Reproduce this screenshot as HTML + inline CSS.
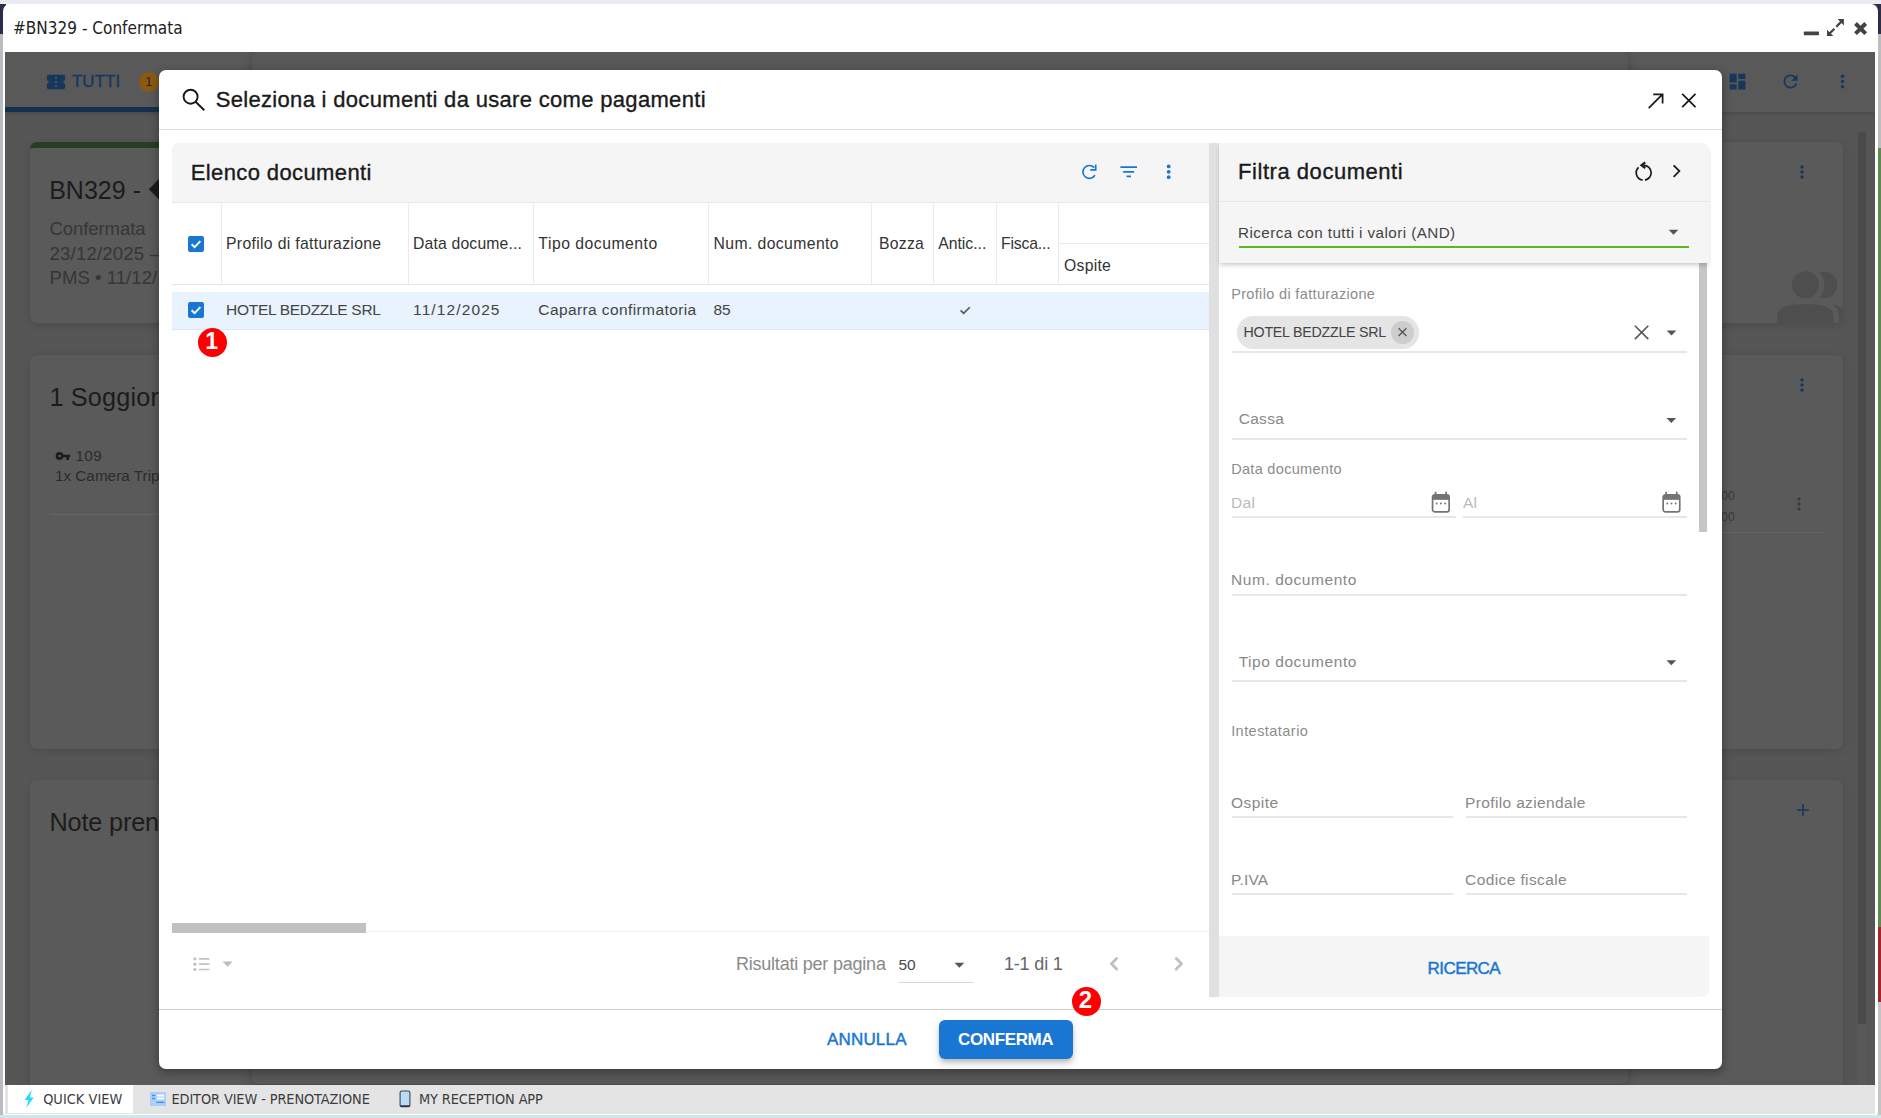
<!DOCTYPE html>
<html lang="it"><head><meta charset="utf-8"><title>#BN329 - Confermata</title>
<style>
html,body{margin:0;padding:0}
body{width:1881px;height:1118px;overflow:hidden;position:relative;background:#e8ecf1;font-family:"Liberation Sans",sans-serif}
.a{position:absolute;box-sizing:border-box}
.t{white-space:nowrap}
svg{display:block}
</style></head><body>
<div class="a" style="left:0px;top:4px;width:3px;height:1114px;background:#b9bcc0;"></div>
<div class="a" style="left:0px;top:4px;width:6px;height:30px;background:#2b2d4a;"></div>
<div class="a" style="left:1872px;top:4px;width:9px;height:30px;background:#2b2d4a;"></div>
<div class="a" style="left:1878px;top:34px;width:3px;height:114px;background:#bdbdbd;"></div>
<div class="a" style="left:1878px;top:148px;width:3px;height:779px;background:#5c8c4c;"></div>
<div class="a" style="left:1878px;top:927px;width:3px;height:75px;background:#a3262b;"></div>
<div class="a" style="left:1878px;top:1002px;width:3px;height:116px;background:#c4c4c4;"></div>
<div class="a" style="left:0px;top:1115px;width:1881px;height:3px;background:#cfe7eb;"></div>
<div class="a" style="left:3px;top:4px;width:1875px;height:1111px;background:#ffffff;border-radius:7px 7px 4px 4px;"></div>
<div class="a" style="left:5px;top:52px;width:1870px;height:1033px;background:#565656;overflow:hidden;"></div>
<div class="a" style="left:5px;top:1085px;width:1870px;height:29px;background:#e4e4e4;"></div>
<div class="a" style="left:8px;top:1085px;width:125px;height:28px;background:#ffffff;"></div>
<span class="a t" id="title" style="left:12.98px;top:14.50px;font:400 17px/26px 'DejaVu Sans Condensed', 'DejaVu Sans', 'Liberation Sans', sans-serif;color:#222;letter-spacing:0.020px;">#BN329 - Confermata</span>
<svg class="a" style="left:1800px;top:14px" width="72" height="28" viewBox="0 0 72 28"><g fill="#444"><rect x="3.8" y="17.5" width="15.2" height="3.8" rx="0.7"/><path d="M37.6,5.1H43.9V11.4ZM27,15.7V22H33.3Z"/></g><g fill="none" stroke="#444"><path d="M36.3,12.7L41.6,7.4M34.4,14.7L29.3,19.8" stroke-width="2.3"/><path d="M55.5,9.5L65.7,19.7M65.7,9.5L55.5,19.7" stroke-width="4"/></g></svg>
<div class="a" style="left:5px;top:52px;width:1870px;height:60px;background:#595959;box-shadow:0 2px 4px rgba(0,0,0,.14);clip-path:inset(0px 0px -8px 0px);"></div>
<svg class="a" style="left:44.80px;top:70.80px;" width="22" height="22" viewBox="0 0 24 24"><path fill="#16375b" d="M13,8.5H11V6.5H13V8.5M13,13H11V11H13V13M13,17.5H11V15.5H13V17.5M22,10V6C22,4.89 21.1,4 20,4H4A2,2 0 0,0 2,6V10C3.11,10 4,10.9 4,12A2,2 0 0,1 2,14V18A2,2 0 0,0 4,20H20A2,2 0 0,0 22,18V14A2,2 0 0,1 20,12C20,10.89 20.9,10 22,10Z"/></svg>
<span class="a t" id="tutti" style="left:71.98px;top:68.80px;font:400 17px/26px 'Liberation Sans', sans-serif;color:#16375b;letter-spacing:0.009px;-webkit-text-stroke:0.3px #16375b;">TUTTI</span>
<div class="a" style="left:139px;top:72px;width:20px;height:20px;background:#8a5a12;border-radius:50%;"></div>
<span class="a t" id="b1" style="left:145.58px;top:73.00px;font:400 12px/18px 'Liberation Sans', sans-serif;color:#2a2210;">1</span>
<div class="a" style="left:5px;top:107px;width:250px;height:5px;background:#15304f;"></div>
<svg class="a" style="left:1727.00px;top:71.00px;" width="21" height="21" viewBox="0 0 24 24"><path fill="#16375b" d="M13,3V9H21V3M13,21H21V11H13M3,21H11V15H3M3,13H11V3H3V13Z"/></svg>
<svg class="a" style="left:1779.50px;top:71.00px;" width="21" height="21" viewBox="0 0 24 24"><path fill="#16375b" d="M17.65,6.35C16.2,4.9 14.21,4 12,4A8,8 0 0,0 4,12A8,8 0 0,0 12,20C15.73,20 18.84,17.45 19.73,14H17.65C16.83,16.33 14.61,18 12,18A6,6 0 0,1 6,12A6,6 0 0,1 12,6C13.66,6 15.14,6.69 16.22,7.78L13,11H20V4L17.65,6.35Z"/></svg>
<svg class="a" style="left:1832.00px;top:71.00px;" width="21" height="21" viewBox="0 0 24 24"><path fill="#16375b" d="M12,16A2,2 0 0,1 14,18A2,2 0 0,1 12,20A2,2 0 0,1 10,18A2,2 0 0,1 12,16M12,10A2,2 0 0,1 14,12A2,2 0 0,1 12,14A2,2 0 0,1 10,12A2,2 0 0,1 12,10M12,4A2,2 0 0,1 14,6A2,2 0 0,1 12,8A2,2 0 0,1 10,6A2,2 0 0,1 12,4Z"/></svg>
<div class="a" style="left:1843px;top:132px;width:15px;height:953px;background:#555555;"></div>
<div class="a" style="left:1858px;top:132px;width:8px;height:892px;background:#4a4a4a;"></div>
<div class="a" style="left:1858px;top:1024px;width:8px;height:61px;background:#595959;"></div>
<div class="a" style="left:30px;top:142px;width:226px;height:181px;background:#5a5a5a;border-radius:7px;border-top:6px solid #263f22;box-shadow:0 2px 8px rgba(0,0,0,.13);"></div>
<span class="a t" id="bn" style="left:49.20px;top:171.00px;font:400 25px/38px 'Liberation Sans', sans-serif;color:#1c1c1c;letter-spacing:0.012px;">BN329 -</span>
<svg class="a" style="left:148px;top:168px" width="44" height="44" viewBox="0 0 44 44"><path fill="#1c1c1c" d="M0.8,21.2L22,0L43.2,21.2L22,42.4Z"/></svg>
<span class="a t" id="conf" style="left:49.59px;top:214.60px;font:400 18.5px/28px 'Liberation Sans', sans-serif;color:#363636;letter-spacing:-0.081px;">Confermata</span>
<span class="a t" id="d1" style="left:49.59px;top:239.50px;font:400 18.5px/28px 'Liberation Sans', sans-serif;color:#363636;letter-spacing:0.218px;">23/12/2025 –</span>
<span class="a t" id="d2" style="left:49.59px;top:264.40px;font:400 18.5px/28px 'Liberation Sans', sans-serif;color:#363636;letter-spacing:0.061px;">PMS • 11/12/</span>
<div class="a" style="left:30px;top:355px;width:226px;height:394px;background:#5a5a5a;border-radius:7px;box-shadow:0 2px 8px rgba(0,0,0,.13);"></div>
<span class="a t" id="sog" style="left:49.49px;top:377.60px;font:400 25.25px/38px 'Liberation Sans', sans-serif;color:#1c1c1c;letter-spacing:0.159px;">1 Soggior</span>
<svg class="a" style="left:55.20px;top:448.00px;" width="16" height="16" viewBox="0 0 24 24"><path fill="#1c1c1c" d="M7,14A2,2 0 0,1 5,12A2,2 0 0,1 7,10A2,2 0 0,1 9,12A2,2 0 0,1 7,14M12.65,10C11.83,7.67 9.61,6 7,6A6,6 0 0,0 1,12A6,6 0 0,0 7,18C9.61,18 11.83,16.33 12.65,14H17V18H21V14H23V10H12.65Z"/></svg>
<span class="a t" id="r109" style="left:75.39px;top:443.70px;font:400 15.25px/23px 'Liberation Sans', sans-serif;color:#2c2c2c;letter-spacing:0.457px;">109</span>
<span class="a t" id="cam" style="left:54.89px;top:463.50px;font:400 15.25px/23px 'Liberation Sans', sans-serif;color:#2c2c2c;letter-spacing:0.034px;">1x Camera Trip</span>
<div class="a" style="left:50px;top:514px;width:120px;height:1px;background:#656565;"></div>
<div class="a" style="left:30px;top:780px;width:226px;height:320px;background:#5a5a5a;border-radius:7px;box-shadow:0 2px 8px rgba(0,0,0,.13);"></div>
<span class="a t" id="note" style="left:49.49px;top:803.00px;font:400 25.25px/38px 'Liberation Sans', sans-serif;color:#1c1c1c;letter-spacing:-0.152px;">Note pren</span>
<div class="a" style="left:1624px;top:142px;width:219px;height:181px;background:#5a5a5a;border-radius:7px;box-shadow:0 2px 8px rgba(0,0,0,.13);overflow:hidden;"><svg class="a" style="left:0;top:0" width="219" height="181" viewBox="1624 142 219 181"><g fill="#4e4e4e"><circle cx="1824" cy="284.8" r="13.3"/><path d="M1828,303.5Q1849,306 1849,323H1838V316Q1838,308 1828,303.5Z"/><circle cx="1805.5" cy="284.8" r="13.3" stroke="#5a5a5a" stroke-width="11" paint-order="stroke"/><path d="M1777.2,324V316Q1777.2,304 1805.5,304Q1833.5,304 1833.5,316V324Z" stroke="#5a5a5a" stroke-width="11" paint-order="stroke"/><circle cx="1805.5" cy="284.8" r="13.3"/></g></svg></div>
<svg class="a" style="left:1792.40px;top:161.50px;" width="20" height="20" viewBox="0 0 24 24"><path fill="#16375b" d="M12,16A2,2 0 0,1 14,18A2,2 0 0,1 12,20A2,2 0 0,1 10,18A2,2 0 0,1 12,16M12,10A2,2 0 0,1 14,12A2,2 0 0,1 12,14A2,2 0 0,1 10,12A2,2 0 0,1 12,10M12,4A2,2 0 0,1 14,6A2,2 0 0,1 12,8A2,2 0 0,1 10,6A2,2 0 0,1 12,4Z"/></svg>
<div class="a" style="left:1624px;top:355px;width:219px;height:394px;background:#5a5a5a;border-radius:7px;box-shadow:0 2px 8px rgba(0,0,0,.13);"></div>
<svg class="a" style="left:1792.40px;top:374.50px;" width="20" height="20" viewBox="0 0 24 24"><path fill="#16375b" d="M12,16A2,2 0 0,1 14,18A2,2 0 0,1 12,20A2,2 0 0,1 10,18A2,2 0 0,1 12,16M12,10A2,2 0 0,1 14,12A2,2 0 0,1 12,14A2,2 0 0,1 10,12A2,2 0 0,1 12,10M12,4A2,2 0 0,1 14,6A2,2 0 0,1 12,8A2,2 0 0,1 10,6A2,2 0 0,1 12,4Z"/></svg>
<svg class="a" style="left:1788.90px;top:494.00px;" width="20" height="20" viewBox="0 0 24 24"><path fill="#3c3c3c" d="M12,16A2,2 0 0,1 14,18A2,2 0 0,1 12,20A2,2 0 0,1 10,18A2,2 0 0,1 12,16M12,10A2,2 0 0,1 14,12A2,2 0 0,1 12,14A2,2 0 0,1 10,12A2,2 0 0,1 12,10M12,4A2,2 0 0,1 14,6A2,2 0 0,1 12,8A2,2 0 0,1 10,6A2,2 0 0,1 12,4Z"/></svg>
<span class="a t" id="z1" style="left:1721.28px;top:486.70px;font:400 12px/18px 'Liberation Sans', sans-serif;color:#363636;">00</span>
<span class="a t" id="z2" style="left:1721.28px;top:507.60px;font:400 12px/18px 'Liberation Sans', sans-serif;color:#363636;">00</span>
<div class="a" style="left:1700px;top:532px;width:123px;height:1px;background:#656565;"></div>
<div class="a" style="left:1624px;top:780px;width:219px;height:320px;background:#5a5a5a;border-radius:7px;box-shadow:0 2px 8px rgba(0,0,0,.13);"></div>
<svg class="a" style="left:1793.00px;top:800.00px;" width="20" height="20" viewBox="0 0 24 24"><path fill="#16375b" d="M19,13H13V19H11V13H5V11H11V5H13V11H19V13Z"/></svg>
<div class="a" style="left:252px;top:52px;width:1376px;height:1032px;background:#585858;border-radius:6px;box-shadow:0 1px 10px rgba(0,0,0,.24);"></div>
<div class="a" style="left:5px;top:40px;width:1870px;height:12px;background:#ffffff;"></div>
<div class="a" style="left:5px;top:1085px;width:1870px;height:29px;background:#e4e4e4;"></div>
<div class="a" style="left:8px;top:1085px;width:125px;height:28px;background:#ffffff;"></div>
<svg class="a" style="left:22px;top:1088px" width="14" height="22" viewBox="22 1088 14 22"><path fill="#1cdcfc" d="M31.9,1089.8L24.6,1100H28.6L26.3,1107.7L33.7,1097.6H29.8Z"/></svg>
<span class="a t" id="qv" style="left:43.14px;top:1088.00px;font:400 14.4px/22px 'DejaVu Sans Condensed', 'DejaVu Sans', 'Liberation Sans', sans-serif;color:#3c3c3c;letter-spacing:0.046px;">QUICK VIEW</span>
<svg class="a" style="left:150px;top:1092px" width="16" height="14" viewBox="0 0 16 14"><rect width="16" height="14" fill="#a9d1f8"/><rect x="2" y="2.8" width="3.2" height="1.4" fill="#3d8fe8"/><rect x="6.8" y="2.6" width="7.4" height="1.8" fill="#fff"/><rect x="2" y="5.8" width="3.2" height="1.4" fill="#3d8fe8"/><rect x="6.8" y="5.6" width="7.4" height="1.8" fill="#fff"/><rect x="2.2" y="9.2" width="2.4" height="2.4" fill="#fff" stroke="#7db6f2" stroke-width="0.6"/><rect x="6.4" y="9.7" width="7.8" height="1.3" fill="#3d8fe8"/></svg>
<span class="a t" id="ev" style="left:171.44px;top:1088.00px;font:400 14.4px/22px 'DejaVu Sans Condensed', 'DejaVu Sans', 'Liberation Sans', sans-serif;color:#3c3c3c;letter-spacing:-0.100px;">EDITOR VIEW - PRENOTAZIONE</span>
<svg class="a" style="left:399px;top:1090px" width="12" height="18" viewBox="0 0 12 18"><rect x="1.1" y="1" width="9.8" height="15.8" rx="1.6" fill="#b9dcf6" stroke="#3a4658" stroke-width="1.1"/><rect x="1.2" y="15.2" width="9.6" height="1.9" rx="0.9" fill="#2a3444"/></svg>
<span class="a t" id="mr" style="left:418.94px;top:1088.00px;font:400 14.4px/22px 'DejaVu Sans Condensed', 'DejaVu Sans', 'Liberation Sans', sans-serif;color:#3c3c3c;letter-spacing:-0.108px;">MY RECEPTION APP</span>
<div class="a" style="left:159px;top:70px;width:1563px;height:999px;background:#ffffff;border-radius:7px;box-shadow:0 3px 9px 1px rgba(0,0,0,.30);"></div>
<div class="a" style="left:159px;top:129px;width:1563px;height:1px;background:#dcdcdc;"></div>
<div class="a" style="left:159px;top:1009px;width:1563px;height:1px;background:#cfcfcf;"></div>
<span class="a t" id="dtitle" style="left:215.68px;top:83.00px;font:400 22px/33px 'Liberation Sans', sans-serif;color:#1a1a1a;letter-spacing:0.321px;-webkit-text-stroke:0.35px #1a1a1a;">Seleziona i documenti da usare come pagamenti</span>
<div class="a" style="left:172px;top:143px;width:1037px;height:60px;background:#f5f5f5;border-radius:7px 0 0 0;"></div>
<div class="a" style="left:172px;top:202px;width:1037px;height:1px;background:#e8e8e8;"></div>
<span class="a t" id="elenco" style="left:190.68px;top:155.50px;font:400 22px/33px 'Liberation Sans', sans-serif;color:#1a1a1a;letter-spacing:0.394px;-webkit-text-stroke:0.35px #1a1a1a;">Elenco documenti</span>
<div class="a" style="left:172px;top:284px;width:1037px;height:1px;background:#e6e6e6;"></div>
<div class="a" style="left:221px;top:203px;width:1px;height:81px;background:#ebebeb;"></div>
<div class="a" style="left:408px;top:203px;width:1px;height:81px;background:#ebebeb;"></div>
<div class="a" style="left:533px;top:203px;width:1px;height:81px;background:#ebebeb;"></div>
<div class="a" style="left:708px;top:203px;width:1px;height:81px;background:#ebebeb;"></div>
<div class="a" style="left:871px;top:203px;width:1px;height:81px;background:#ebebeb;"></div>
<div class="a" style="left:933px;top:203px;width:1px;height:81px;background:#ebebeb;"></div>
<div class="a" style="left:996px;top:203px;width:1px;height:81px;background:#ebebeb;"></div>
<div class="a" style="left:1058px;top:203px;width:1px;height:81px;background:#ebebeb;"></div>
<div class="a" style="left:1058px;top:243px;width:151px;height:1px;background:#ebebeb;"></div>
<span class="a t" id="h1" style="left:226.06px;top:231.70px;font:400 15.75px/24px 'Liberation Sans', sans-serif;color:#333;letter-spacing:0.322px;">Profilo di fatturazione</span>
<span class="a t" id="h2" style="left:413.06px;top:231.70px;font:400 15.75px/24px 'Liberation Sans', sans-serif;color:#333;letter-spacing:0.162px;">Data docume...</span>
<span class="a t" id="h3" style="left:538.36px;top:231.70px;font:400 15.75px/24px 'Liberation Sans', sans-serif;color:#333;letter-spacing:0.494px;">Tipo documento</span>
<span class="a t" id="h4" style="left:713.46px;top:231.70px;font:400 15.75px/24px 'Liberation Sans', sans-serif;color:#333;letter-spacing:0.403px;">Num. documento</span>
<span class="a t" id="h5" style="left:879.06px;top:231.70px;font:400 15.75px/24px 'Liberation Sans', sans-serif;color:#333;letter-spacing:0.239px;">Bozza</span>
<span class="a t" id="h6" style="left:938.26px;top:231.70px;font:400 15.75px/24px 'Liberation Sans', sans-serif;color:#333;letter-spacing:-0.010px;">Antic...</span>
<span class="a t" id="h7" style="left:1001.06px;top:231.70px;font:400 15.75px/24px 'Liberation Sans', sans-serif;color:#333;letter-spacing:-0.186px;">Fisca...</span>
<span class="a t" id="h8" style="left:1064.06px;top:253.60px;font:400 15.75px/24px 'Liberation Sans', sans-serif;color:#333;letter-spacing:0.257px;">Ospite</span>
<svg class="a" style="left:188px;top:235.7px" width="16" height="16" viewBox="0 0 16 16"><rect width="16" height="16" rx="2" fill="#1976d2"/><path d="M3.6 8.2L6.6 11.1L12.4 5.2" fill="none" stroke="#fff" stroke-width="1.9"/></svg>
<div class="a" style="left:172px;top:292px;width:1037px;height:38px;background:#e9f3fd;border-bottom:1px solid #dde7f1;"></div>
<svg class="a" style="left:188px;top:302px" width="16" height="16" viewBox="0 0 16 16"><rect width="16" height="16" rx="2" fill="#1976d2"/><path d="M3.6 8.2L6.6 11.1L12.4 5.2" fill="none" stroke="#fff" stroke-width="1.9"/></svg>
<span class="a t" id="r1" style="left:226.07px;top:297.70px;font:400 15.5px/23px 'Liberation Sans', sans-serif;color:#444;letter-spacing:-0.299px;">HOTEL BEDZZLE SRL</span>
<span class="a t" id="r2" style="left:413.07px;top:297.70px;font:400 15.5px/23px 'Liberation Sans', sans-serif;color:#444;letter-spacing:1.111px;">11/12/2025</span>
<span class="a t" id="r3" style="left:538.37px;top:297.70px;font:400 15.5px/23px 'Liberation Sans', sans-serif;color:#444;letter-spacing:0.397px;">Caparra confirmatoria</span>
<span class="a t" id="r4" style="left:713.47px;top:297.70px;font:400 15.5px/23px 'Liberation Sans', sans-serif;color:#444;">85</span>
<div class="a" style="left:197.5px;top:327.5px;width:29.5px;height:29.5px;background:#ff0000;border-radius:50%;"></div>
<span class="a t" id="rb1" style="left:205.22px;top:324.20px;font:700 23px/34px 'Liberation Sans', sans-serif;color:#fff;">1</span>
<div class="a" style="left:172px;top:931px;width:1037px;height:1px;background:#f1f1f1;"></div>
<div class="a" style="left:172px;top:922.5px;width:194px;height:10px;background:#c1c1c1;"></div>
<span class="a t" id="rpp" style="left:735.92px;top:950.90px;font:400 18px/27px 'Liberation Sans', sans-serif;color:#8a8a8a;letter-spacing:-0.215px;">Risultati per pagina</span>
<span class="a t" id="n50" style="left:898.47px;top:952.90px;font:400 15.5px/23px 'Liberation Sans', sans-serif;color:#4a4a4a;">50</span>
<div class="a" style="left:899px;top:982px;width:75px;height:1px;background:#d8d8d8;"></div>
<span class="a t" id="pg" style="left:1003.92px;top:950.90px;font:400 18px/27px 'Liberation Sans', sans-serif;color:#666;letter-spacing:-0.156px;">1-1 di 1</span>
<div class="a" style="left:1209px;top:143px;width:10px;height:854px;background:#e0e0e0;"></div>
<div class="a" style="left:1219px;top:262px;width:490px;height:674px;background:#ffffff;"></div>
<div class="a" style="left:1698.5px;top:262px;width:8px;height:270px;background:#c6c6c6;"></div>
<div class="a" style="left:1219px;top:143px;width:490px;height:120px;background:#f5f5f5;border-radius:0 7px 0 0;box-shadow:0 3px 5px -1px rgba(0,0,0,.22);"></div>
<div class="a" style="left:1219px;top:201px;width:490px;height:1px;background:#e6e6e6;"></div>
<span class="a t" id="filtra" style="left:1238.08px;top:155.00px;font:400 22px/33px 'Liberation Sans', sans-serif;color:#1a1a1a;letter-spacing:0.537px;-webkit-text-stroke:0.35px #1a1a1a;">Filtra documenti</span>
<span class="a t" id="ric" style="left:1238.09px;top:220.70px;font:400 15.25px/23px 'Liberation Sans', sans-serif;color:#444;letter-spacing:0.415px;">Ricerca con tutti i valori (AND)</span>
<div class="a" style="left:1239px;top:246px;width:450px;height:2px;background:#5cb81c;"></div>
<span class="a t" id="l1" style="left:1231.13px;top:282.60px;font:400 14.5px/22px 'Liberation Sans', sans-serif;color:#8c8c8c;letter-spacing:0.345px;">Profilo di fatturazione</span>
<div class="a" style="left:1236.5px;top:316px;width:182.5px;height:32.5px;background:#e5e5e5;border-radius:16px;"></div>
<span class="a t" id="chip" style="left:1243.55px;top:321.70px;font:400 14.25px/21px 'Liberation Sans', sans-serif;color:#444;letter-spacing:-0.255px;">HOTEL BEDZZLE SRL</span>
<div class="a" style="left:1391px;top:320.5px;width:23px;height:23px;background:#cdcdcd;border-radius:50%;"></div>
<div class="a" style="left:1232px;top:351px;width:455px;height:2px;background:#e7e7e7;"></div>
<span class="a t" id="cassa" style="left:1238.67px;top:407.40px;font:400 15.5px/23px 'Liberation Sans', sans-serif;color:#888;letter-spacing:0.322px;">Cassa</span>
<div class="a" style="left:1232px;top:438px;width:455px;height:2px;background:#e7e7e7;"></div>
<span class="a t" id="l2" style="left:1231.13px;top:457.80px;font:400 14.5px/22px 'Liberation Sans', sans-serif;color:#8c8c8c;letter-spacing:0.317px;">Data documento</span>
<span class="a t" id="dal" style="left:1231.07px;top:491.20px;font:400 15.5px/23px 'Liberation Sans', sans-serif;color:#bbb;letter-spacing:0.261px;">Dal</span>
<div class="a" style="left:1232px;top:516px;width:224px;height:2px;background:#e7e7e7;"></div>
<span class="a t" id="al" style="left:1463.07px;top:491.20px;font:400 15.5px/23px 'Liberation Sans', sans-serif;color:#bbb;">Al</span>
<div class="a" style="left:1462.5px;top:516px;width:224.5px;height:2px;background:#e7e7e7;"></div>
<span class="a t" id="numd" style="left:1231.07px;top:568.40px;font:400 15.5px/23px 'Liberation Sans', sans-serif;color:#888;letter-spacing:0.558px;">Num. documento</span>
<div class="a" style="left:1232px;top:594px;width:455px;height:2px;background:#e7e7e7;"></div>
<span class="a t" id="tipod" style="left:1238.67px;top:650.40px;font:400 15.5px/23px 'Liberation Sans', sans-serif;color:#888;letter-spacing:0.548px;">Tipo documento</span>
<div class="a" style="left:1232px;top:680px;width:455px;height:2px;background:#e7e7e7;"></div>
<span class="a t" id="l3" style="left:1231.13px;top:719.80px;font:400 14.5px/22px 'Liberation Sans', sans-serif;color:#8c8c8c;letter-spacing:0.458px;">Intestatario</span>
<span class="a t" id="osp" style="left:1231.07px;top:791.10px;font:400 15.5px/23px 'Liberation Sans', sans-serif;color:#888;letter-spacing:0.456px;">Ospite</span>
<div class="a" style="left:1232px;top:816px;width:221px;height:2px;background:#e7e7e7;"></div>
<span class="a t" id="paz" style="left:1465.07px;top:791.10px;font:400 15.5px/23px 'Liberation Sans', sans-serif;color:#888;letter-spacing:0.355px;">Profilo aziendale</span>
<div class="a" style="left:1465.5px;top:816px;width:221.5px;height:2px;background:#e7e7e7;"></div>
<span class="a t" id="piva" style="left:1231.07px;top:868.30px;font:400 15.5px/23px 'Liberation Sans', sans-serif;color:#888;letter-spacing:0.133px;">P.IVA</span>
<div class="a" style="left:1232px;top:893px;width:221px;height:2px;background:#e7e7e7;"></div>
<span class="a t" id="cf" style="left:1465.07px;top:868.30px;font:400 15.5px/23px 'Liberation Sans', sans-serif;color:#888;letter-spacing:0.396px;">Codice fiscale</span>
<div class="a" style="left:1465.5px;top:893px;width:221.5px;height:2px;background:#e7e7e7;"></div>
<div class="a" style="left:1219px;top:936px;width:490px;height:61px;background:#f5f5f5;border-radius:0 0 7px 0;"></div>
<span class="a t" id="ricerca" style="left:1427.58px;top:955.60px;font:400 17px/26px 'Liberation Sans', sans-serif;color:#1976d2;letter-spacing:-0.574px;-webkit-text-stroke:0.45px #1976d2;">RICERCA</span>
<span class="a t" id="ann" style="left:826.98px;top:1027.20px;font:400 17px/26px 'Liberation Sans', sans-serif;color:#1976d2;letter-spacing:0.183px;-webkit-text-stroke:0.45px #1976d2;">ANNULLA</span>
<div class="a" style="left:939px;top:1020px;width:134px;height:39px;background:#1976d2;border-radius:6px;box-shadow:0 3px 5px -1px rgba(0,0,0,.2),0 5px 8px rgba(0,0,0,.14);"></div>
<span class="a t" id="confb" style="left:957.98px;top:1027.20px;font:700 17px/26px 'Liberation Sans', sans-serif;color:#fff;letter-spacing:-0.365px;">CONFERMA</span>
<div class="a" style="left:1071.7px;top:986.7px;width:29.5px;height:29.5px;background:#ff0000;border-radius:50%;"></div>
<span class="a t" id="rb2" style="left:1078.86px;top:981.60px;font:700 24px/36px 'Liberation Sans', sans-serif;color:#fff;">2</span>
<svg class="a" style="left:0;top:0" width="1881" height="1118" viewBox="0 0 1881 1118"><circle cx="190.6" cy="96.7" r="7.0" fill="none" stroke="#1a1a1a" stroke-width="1.9"/><path d="M195.6,101.7L204.3,110.3" fill="none" stroke="#1a1a1a" stroke-width="1.9" /><path d="M1648.7,108.1L1662.4,94.4M1653.2,94.3H1662.6V103.6" fill="none" stroke="#1a1a1a" stroke-width="1.75" /><path d="M1682.2,93.8L1695.5,107.1M1695.5,93.8L1682.2,107.1" fill="none" stroke="#1a1a1a" stroke-width="1.75" /><path d="M1094.9,175.3A6.45,6.45 0 1 1 1094.2,167.6" fill="none" stroke="#1976d2" stroke-width="1.65" /><path d="M1090.3,169.9H1095.7V164.5" fill="none" stroke="#1976d2" stroke-width="1.65" /><path d="M1120.4,167.1H1137M1123.2,171.8H1134.1M1126.6,176.3H1131" fill="none" stroke="#1976d2" stroke-width="1.65" /><g fill="#1976d2"><circle cx="1168.7" cy="166.4" r="1.9"/><circle cx="1168.7" cy="171.8" r="1.9"/><circle cx="1168.7" cy="177.2" r="1.9"/></g><path d="M960.6,310.4L963.6,313.4L969.8,307.2" fill="none" stroke="#555" stroke-width="1.6" /><path d="M198.9,958.8H209.4M198.9,964.2H209.4M198.9,969.5H209.4" fill="none" stroke="#c3c3c3" stroke-width="1.7" /><g fill="#c0c0c0"><circle cx="194.9" cy="958.8" r="1.6"/><circle cx="194.9" cy="964.2" r="1.6"/><circle cx="194.9" cy="969.5" r="1.6"/></g><path d="M222.50,961.55H232.70L227.60,966.85Z" fill="#bdbdbd"/><path d="M954.55,962.80H964.25L959.40,967.80Z" fill="#555"/><path d="M1116.6,958.5L1111.4,963.8L1116.6,969.1" fill="none" stroke="#c1c1c1" stroke-width="2.9" stroke-linecap="round" stroke-linejoin="round"/><path d="M1176.3,958.5L1181.5,963.8L1176.3,969.1" fill="none" stroke="#c1c1c1" stroke-width="2.9" stroke-linecap="round" stroke-linejoin="round"/><path d="M1643.0,165.3A7.5,7.5 0 0 0 1638.2,167.5" fill="none" stroke="#1a1a1a" stroke-width="1.7" opacity="0"/><path d="M1638.6,167.3A7.45,7.45 0 0 0 1642.6,180.1M1644.9,180.1A7.45,7.45 0 0 0 1643.9,165.3" fill="none" stroke="#1a1a1a" stroke-width="1.7" /><path d="M1639.7,165.3L1644.6,161.6L1645.9,163.3L1643.4,165.2L1645.9,167.3L1644.6,169Z" fill="#1a1a1a"/><path d="M1673.6,165.3L1679.4,171.1L1673.6,176.9" fill="none" stroke="#1a1a1a" stroke-width="1.75" /><path d="M1668.65,229.80H1678.35L1673.50,234.80Z" fill="#555"/><path d="M1398.6,328.2L1406.4,336M1406.4,328.2L1398.6,336" fill="none" stroke="#555" stroke-width="1.35" /><path d="M1634.9,325.7L1648.3,339.1M1648.3,325.7L1634.9,339.1" fill="none" stroke="#555" stroke-width="1.55" /><path d="M1666.65,330.50H1676.35L1671.50,335.50Z" fill="#555"/><path d="M1666.45,418.10H1676.15L1671.30,423.10Z" fill="#555"/><g transform="translate(1431.7,494)"><rect x="0.85" y="0.85" width="16.6" height="17.1" rx="2.4" fill="none" stroke="#747474" stroke-width="1.7"/><rect x="0.85" y="0.85" width="16.6" height="5" fill="#747474"/><rect x="3" y="-2.3" width="1.7" height="3" fill="#747474"/><rect x="13.6" y="-2.3" width="1.7" height="3" fill="#747474"/><circle cx="5" cy="9.5" r="0.95" fill="#747474"/><circle cx="9.2" cy="9.5" r="0.95" fill="#747474"/><circle cx="13.4" cy="9.5" r="0.95" fill="#747474"/></g><g transform="translate(1662.3,494)"><rect x="0.85" y="0.85" width="16.6" height="17.1" rx="2.4" fill="none" stroke="#747474" stroke-width="1.7"/><rect x="0.85" y="0.85" width="16.6" height="5" fill="#747474"/><rect x="3" y="-2.3" width="1.7" height="3" fill="#747474"/><rect x="13.6" y="-2.3" width="1.7" height="3" fill="#747474"/><circle cx="5" cy="9.5" r="0.95" fill="#747474"/><circle cx="9.2" cy="9.5" r="0.95" fill="#747474"/><circle cx="13.4" cy="9.5" r="0.95" fill="#747474"/></g><path d="M1666.45,660.30H1676.15L1671.30,665.30Z" fill="#555"/></svg>
</body></html>
